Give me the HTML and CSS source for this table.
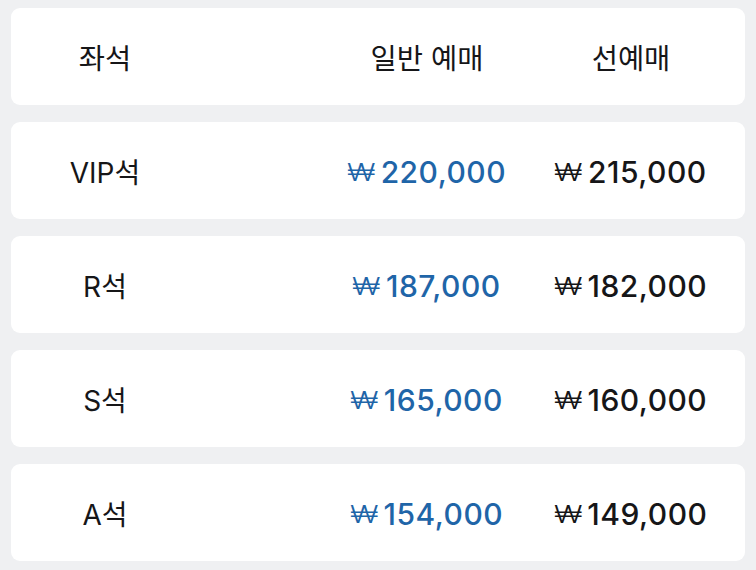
FILE: index.html
```html
<!DOCTYPE html>
<html lang="ko">
<head>
<meta charset="utf-8">
<link rel="stylesheet" href="styles.css">
</head>
<body>
<div class="table">
  <div class="card head">
    <div class="c1">좌석</div>
    <div class="c2">일반 예매</div>
    <div class="c3">선예매</div>
  </div>
  <div class="card">
    <div class="c1">VIP석</div>
    <div class="c2 price blue"><span class="won">₩</span>220,000</div>
    <div class="c3 price"><span class="won">₩</span>215,000</div>
  </div>
  <div class="card">
    <div class="c1">R석</div>
    <div class="c2 price blue"><span class="won">₩</span>187,000</div>
    <div class="c3 price"><span class="won">₩</span>182,000</div>
  </div>
  <div class="card">
    <div class="c1">S석</div>
    <div class="c2 price blue"><span class="won">₩</span>165,000</div>
    <div class="c3 price"><span class="won">₩</span>160,000</div>
  </div>
  <div class="card">
    <div class="c1">A석</div>
    <div class="c2 price blue"><span class="won">₩</span>154,000</div>
    <div class="c3 price"><span class="won">₩</span>149,000</div>
  </div>
</div>
</body>
</html>
```
FILE: styles.css
```css
html, body {
  margin: 0;
  padding: 0;
  background: #eff0f2;
}
body {
  padding: 8px 11px;
  font-family: "Inter", "Noto Sans CJK KR", sans-serif;
  color: #161618;
}
.table {
  display: flex;
  flex-direction: column;
  gap: 17px;
}
.card {
  background: #ffffff;
  border-radius: 9px;
  height: 97px;
  display: grid;
  grid-template-columns: 188px 1fr 204px 204px;
  padding-right: 12px;
  align-items: center;
  font-size: 28px;
}
.c1 {
  grid-column: 1;
  text-align: center;
  font-weight: 400;
}
.c2 {
  grid-column: 3;
  text-align: center;
  white-space: nowrap;
}
.c3 {
  grid-column: 4;
  text-align: center;
  white-space: nowrap;
}
.head .c1, .head .c2, .head .c3 {
  font-family: "Noto Sans CJK KR", sans-serif;
  font-weight: 400;
  font-size: 28.5px;
}
.price {
  font-weight: 500;
  font-size: 30px;
  letter-spacing: 0.5px;
  padding-top: 3px;
}
.blue {
  color: #1f65a8;
}
.won {
  font-family: "Inter", "DejaVu Sans", sans-serif;
  font-weight: 300;
  font-size: 29px;
  letter-spacing: 0;
  margin-right: 6px;
  display: inline-block;
  transform: scale(1.05, 0.85);
}
```
